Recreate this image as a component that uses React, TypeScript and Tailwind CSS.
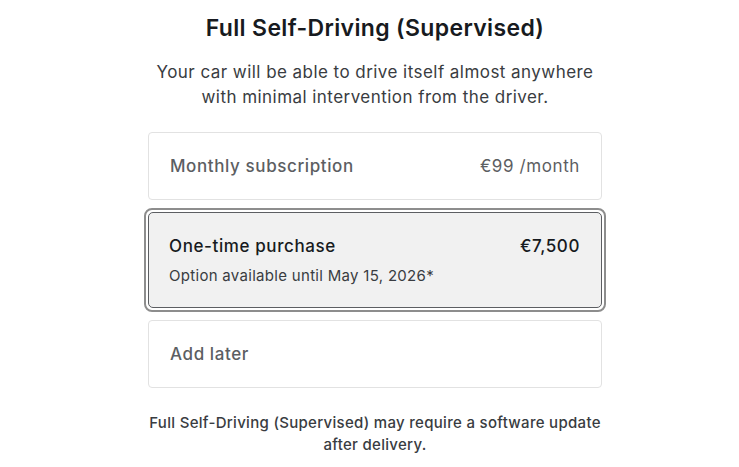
import { useState } from "react";

type OptionId = "monthly" | "once" | "later";

interface PlanOption {
  id: OptionId;
  label: string;
  price?: string;
  note?: string;
}

const options: PlanOption[] = [
  { id: "monthly", label: "Monthly subscription", price: "€99 /month" },
  { id: "once", label: "One-time purchase", price: "€7,500", note: "Option available until May 15, 2026*" },
  { id: "later", label: "Add later" },
];

function OptionCard({ option, selected, onSelect }: { option: PlanOption; selected: boolean; onSelect: () => void }) {
  if (selected) {
    return (
      <button
        onClick={onSelect}
        className="block w-[462px] -mx-[4px] rounded-[8px] border-2 border-[#8d8d8d] p-[2px] text-left cursor-pointer"
      >
        <div className="rounded-[5px] border border-[#5c5e62] bg-[#f1f1f1] px-[20px] pt-[21px] pb-[21px]">
          <div className="flex items-center justify-between text-[17px] leading-[24px] tracking-[0.6px] font-medium text-[#171a20]">
            <span>{option.label}</span>
            {option.price && <span className="mr-[1px]">{option.price}</span>}
          </div>
          {option.note && (
            <p className="mt-[8px] text-[15px] leading-[20px] tracking-[0.3px] text-[#393c41]">{option.note}</p>
          )}
        </div>
      </button>
    );
  }

  return (
    <button
      onClick={onSelect}
      className="flex h-[68px] w-full items-center justify-between rounded-[4px] border border-[#e2e2e2] bg-white px-[21px] pt-[2px] text-left text-[17px] tracking-[0.6px] font-medium text-[#5c5e62] cursor-pointer"
    >
      <span>{option.label}</span>
      {option.price && <span className="font-normal">{option.price}</span>}
    </button>
  );
}

export default function App() {
  const [selected, setSelected] = useState<OptionId>("once");

  return (
    <div className="min-h-[467px] bg-white font-['Inter',sans-serif]">
      <div className="ml-[148px] w-[454px] pt-[12px] text-center">
        <h2 className="text-[23px] leading-[32px] tracking-[0.35px] font-semibold text-[#171a20]">Full Self-Driving (Supervised)</h2>
        <p className="mt-[16px] text-[17px] leading-[25px] tracking-[0.45px] text-[#393c41]">
          Your car will be able to drive itself almost anywhere
          <br />
          with minimal intervention from the driver.
        </p>

        <div className="mt-[22px] flex flex-col gap-[8px]">
          {options.map((o) => (
            <OptionCard key={o.id} option={o} selected={selected === o.id} onSelect={() => setSelected(o.id)} />
          ))}
        </div>

        <p className="-mx-[4px] mt-[24px] text-[15px] leading-[22px] tracking-[0.3px] font-medium text-[#393c41]">
          Full Self-Driving (Supervised) may require a software update
          <br />
          after delivery.
        </p>
      </div>
    </div>
  );
}
